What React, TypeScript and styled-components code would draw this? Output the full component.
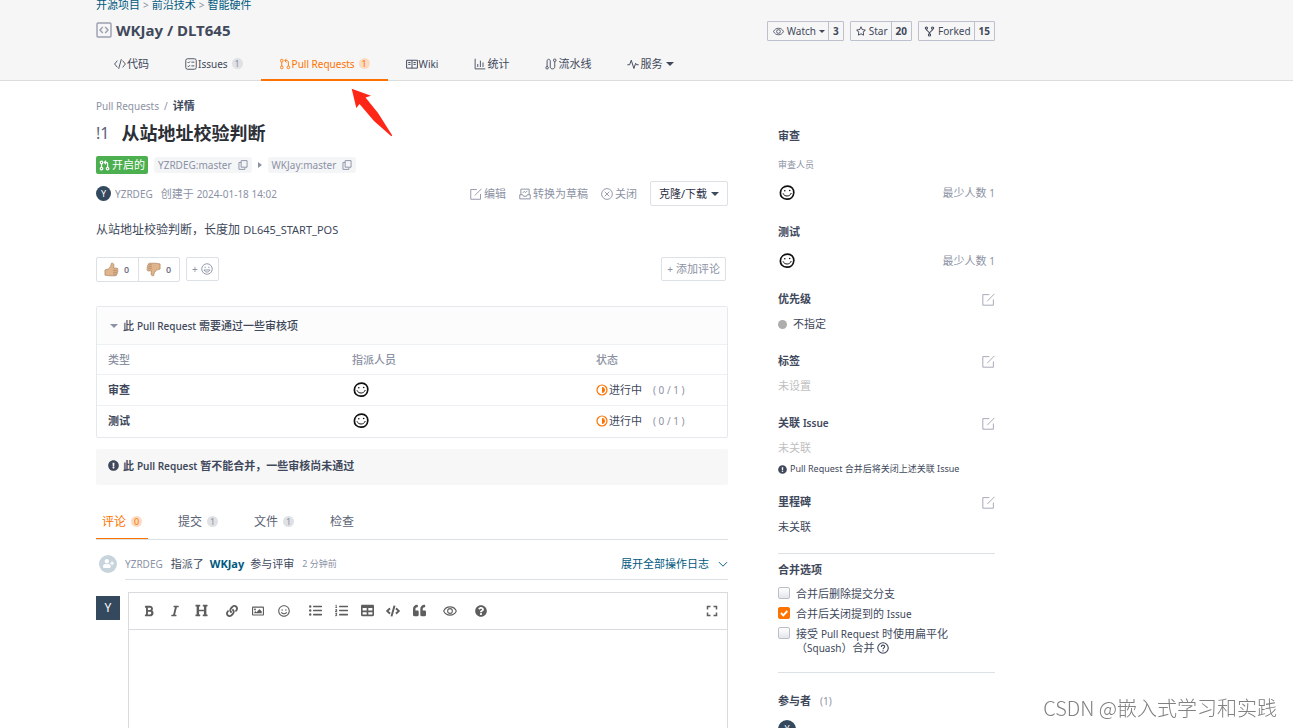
import React from 'react';
import styled, { createGlobalStyle, css } from 'styled-components';
import {
  FaBold, FaItalic, FaHeading, FaLink, FaRegImage, FaRegSmile, FaListUl, FaListOl,
  FaTable, FaCode, FaQuoteLeft, FaQuestionCircle, FaExclamationCircle, FaUserPlus, FaRegStar,
} from 'react-icons/fa';
import { MdFullscreen } from 'react-icons/md';

const c = {
  text: '#40485b',
  muted: '#8c92a4',
  faint: '#bfbfbf',
  link: '#005980',
  orange: '#fe7300',
  line: '#dce1e6',
  navy: '#34495e',
};

const GlobalStyle = createGlobalStyle`
  * { box-sizing: border-box; }
  body {
    margin: 0;
    background: #fff;
    color: ${c.text};
    font: 11px/16px "Noto Sans", "Noto Sans CJK SC", sans-serif;
  }
  button, input, textarea { font: inherit; color: inherit; }
  a { color: inherit; text-decoration: none; }
  h1, h2, h3, p { margin: 0; font-size: inherit; }
  svg { flex: none; display: block; }
`;

/* Latin runs are set one step smaller than the Chinese text around them. */
const Latin = styled.span<{ $size?: number }>`
  font-size: ${(p) => p.$size ?? 10}px;
`;

function Mixed({ text, size }: { text: string; size?: number }) {
  return (
    <span>
      {text.split(/([\x21-\x7e][\x20-\x7e]*[\x21-\x7e]|[\x21-\x7e])/).map((part, i) =>
        i % 2 ? <Latin key={i} $size={size}>{part}</Latin> : part,
      )}
    </span>
  );
}

/* ---------- icons ---------- */

const Stroke = ({ size = 12, w = 1.2, children }: { size?: number; w?: number; children: React.ReactNode }) => (
  <svg width={size} height={size} viewBox="0 0 16 16" fill="none" stroke="currentColor" strokeWidth={w} aria-hidden>
    {children}
  </svg>
);

const RepoIcon = () => (
  <Stroke size={16} w={1.4}>
    <rect x="1" y="1" width="14" height="14" rx="1" />
    <path d="M6.8 5 4 8l2.8 3M9.2 5 12 8l-2.8 3" />
  </Stroke>
);
const CodeIcon = () => (
  <Stroke w={1.2}><path d="M4.500 3.500.8 8l3.700 4.500M11.500 3.500 15.200 8l-3.700 4.500M9.800 1.500 6.200 14.500" /></Stroke>
);
const IssueIcon = () => (
  <Stroke w={1.2}>
    <rect x="1" y="1" width="14" height="14" rx="2.500" />
    <path d="m3.500 5.500 1.200 1.200L6.700 4.500M8.500 5.500h4M3.500 10.500l1.200 1.200 2-2.200M8.500 10.500h4" />
  </Stroke>
);
const PullIcon = ({ size = 12, w = 1.2 }: { size?: number; w?: number }) => (
  <Stroke size={size} w={w}>
    <circle cx="3.700" cy="3.500" r="1.800" />
    <circle cx="3.700" cy="12.500" r="1.800" />
    <circle cx="12.500" cy="12.500" r="1.800" />
    <path d="M3.700 5.300v5.400M12.500 10.700V5.500c0-1.300-.7-2-2-2H8M10 1 7.700 3.500 10 6" />
  </Stroke>
);
const WikiIcon = () => (
  <Stroke w={1.3}><path d="M.8 3h14.400v10.500H.8zM8 3v10.500M3 6h3M3 8.500h3M10 6h3M10 8.500h3" /></Stroke>
);
const StatsIcon = () => (
  <Stroke w={1.2}><path d="M1.500 1v13.500H15M5 12V8M8.500 12V3.500M12 12V6" /></Stroke>
);
const PipelineIcon = () => (
  <Stroke w={1.2}>
    <circle cx="2.800" cy="13" r="1.700" />
    <circle cx="13" cy="3" r="1.700" />
    <path d="M2.800 11.300V4c0-3 4.200-3 4.200 0v8c0 3.300 6 3.300 6 0V4.700" />
  </Stroke>
);
const PulseIcon = () => (
  <Stroke w={1.3}><path d="M.5 9h3l2.200-6 3.500 11 2.300-7 1.300 2h2.700" /></Stroke>
);
const EyeIcon = ({ size = 12 }: { size?: number }) => (
  <Stroke size={size}>
    <path d="M.8 8C3.500 1.700 12.500 1.700 15.200 8 12.500 14.300 3.500 14.300.8 8z" />
    <circle cx="8" cy="8" r="2.700" />
  </Stroke>
);
const ForkIcon = () => (
  <Stroke size={11} w={1.6}>
    <circle cx="3.500" cy="3" r="1.600" />
    <circle cx="12.500" cy="3" r="1.600" />
    <circle cx="8" cy="13" r="1.600" />
    <path d="M3.500 4.600c0 3.400 4.500 2.400 4.500 6.800 0-4.400 4.500-3.400 4.500-6.800" />
  </Stroke>
);
const EditIcon = ({ size = 12 }: { size?: number }) => (
  <Stroke size={size}><path d="M9 2H1v13h13V8M15.300 1 6.500 10" /></Stroke>
);
const DraftIcon = () => (
  <Stroke w={1.3}>
    <path d="M2.500 9V1.500h11V9M1 9v5.500h14V9h-4l-1 2H6L5 9zM5 6.500l2-2 1.500 1.500L11 4" />
  </Stroke>
);
const CloseIcon = () => (
  <Stroke><circle cx="8" cy="8" r="7.200" /><path d="m5 5 6 6M11 5l-6 6" /></Stroke>
);
const CopyIcon = () => (
  <Stroke size={10} w={1.5}><path d="M5 1h9.500v10.500H5zM5 4H1.500v11H11v-3" /></Stroke>
);
const SmileIcon = () => (
  <Stroke w={1.2}>
    <circle cx="8" cy="8" r="7" />
    <path d="M5.500 4.800v2M10.500 4.800v2M4 9.300c1.500 3.700 6.500 3.700 8 0z" />
  </Stroke>
);
const FaceIcon = () => (
  <svg width="18" height="18" viewBox="0 0 18 18" aria-hidden>
    <path d="M9.500 2.100C13.500 2 16 5 15.800 8.800c-.3 4-3.300 6.600-7.100 6.400C4.800 15 2.200 12.300 2.400 8.700 2.600 5 5.500 2.200 9.500 2.100z" fill="none" stroke="#111" strokeWidth="1.700" />
    <circle cx="6.800" cy="6.700" r=".8" fill="#111" />
    <circle cx="11.700" cy="6.500" r=".8" fill="#111" />
    <path d="M5 9.300c1.300 3.700 7 3.600 8.300-.3" fill="none" stroke="#111" strokeWidth="1" />
  </svg>
);
const ProgressIcon = () => (
  <svg width="12" height="12" viewBox="0 0 12 12" aria-hidden>
    <circle cx="6" cy="6" r="5" fill="none" stroke={c.orange} strokeWidth="1.200" />
    <path d="M6 3c4 0 4 6 0 6z" fill={c.orange} />
  </svg>
);
const ThumbIcon = ({ down }: { down?: boolean }) => (
  <svg width="15" height="15" viewBox="0 0 16 16" aria-hidden>
    <g transform={down ? 'rotate(180 8 8)' : undefined}>
      <path d="M1 8.500c1.500-.6 2.700-.8 3.500-1C6.500 6 7.600 4 7.800 1.500c1.700-.8 3 .4 2.800 2.200L10.200 6.500h3.300c1.500 0 1.800 1.700.8 2.300.9.600.8 1.800-.2 2.200.6.700.3 1.700-.6 2 .3.900-.3 1.700-1.400 1.700H6.500L1 14z" fill="#e0b48c" stroke="#a5805c" strokeWidth=".7" />
      <path d="M9.800 8.900h4M9.800 11h4M9.800 13h3.500" stroke="#a5805c" strokeWidth=".7" />
    </g>
  </svg>
);
const HelpIcon = () => (
  <Stroke size={12} w={1.5}>
    <circle cx="8" cy="8" r="7" />
    <path d="M5.800 6.500c0-3 4.400-3 4.400-.2 0 1.500-2.200 1.700-2.200 3.400M8 11v1.500" />
  </Stroke>
);
const ChevronIcon = () => (
  <Stroke size={10} w={1.5}><path d="M1.500 5 8 11.500 14.500 5" /></Stroke>
);

const Caret = styled.i<{ $dir?: 'down' | 'right'; $color?: string; $small?: boolean }>`
  flex: none;
  width: 0;
  height: 0;
  border: solid transparent;
  ${(p) => p.$dir === 'right'
    ? css`border-width: 3px 0 3px 4px; border-left-color: ${p.$color ?? c.text};`
    : css`border-width: ${p.$small ? '3px 3px 0' : '4px 4px 0'}; border-top-color: ${p.$color ?? c.text};`}
`;

/* ---------- page header ---------- */

const Page = styled.div`
  height: 100vh;
  overflow: hidden;
`;
const Header = styled.header`
  height: 81px;
  background: #f6f6f6;
  border-bottom: 1px solid #dcdcdc;
`;
const Container = styled.div`
  max-width: 995px;
  padding-left: 96px;
`;
const Trail = styled.nav`
  display: flex;
  gap: 3px;
  line-height: 10px;
  color: ${c.muted};
  a { color: ${c.link}; }
`;
const RepoRow = styled.div`
  display: flex;
  justify-content: space-between;
  align-items: center;
  height: 40px;
`;
const RepoName = styled.h1`
  display: flex;
  align-items: center;
  gap: 4px;
  font-size: 15px;
  line-height: 20px;
  svg { color: #9a9fb0; }
`;
const Actions = styled.div`
  display: flex;
  gap: 6px;
  padding-top: 2px;
`;
const ActionGroup = styled.div`
  display: flex;
  height: 20px;
  border: 1px solid #bdc0cd;
  border-radius: 1px;
`;
const ActionButton = styled.button`
  display: flex;
  align-items: center;
  gap: 3px;
  padding: 0 3px 0 5px;
  border: 0;
  background: none;
  font-size: 10px;
`;
const ActionCount = styled.a`
  padding: 0 4px;
  border-left: 1px solid #bdc0cd;
  font-size: 10px;
  line-height: 18px;
  font-weight: 700;
`;
const RepoTabs = styled.nav`
  display: flex;
  height: 31px;
`;
const RepoTab = styled.a<{ $active?: boolean }>`
  display: flex;
  align-items: center;
  gap: 1px;
  padding: 0 18px 4px;
  white-space: nowrap;
  ${(p) => p.$active && css`
    color: ${c.orange};
    box-shadow: inset 0 -2px ${c.orange};
  `}
`;
const Count = styled.span<{ $active?: boolean }>`
  min-width: 11px;
  height: 11px;
  margin-left: 3px;
  border-radius: 6px;
  background: ${(p) => (p.$active ? '#fbdcc3' : '#e0e1e5')};
  color: ${(p) => (p.$active ? c.orange : c.muted)};
  font-size: 9px;
  line-height: 11px;
  text-align: center;
`;

/* ---------- content ---------- */

const Columns = styled(Container)`
  display: grid;
  grid-template-columns: minmax(0, 1fr) 217px;
  gap: 50px;
`;
const Main = styled.main`
  padding-top: 17px;
`;
const Crumbs = styled.nav`
  display: flex;
  gap: 5px;
  font-size: 10px;
  color: ${c.muted};
  b { font-size: 11px; color: ${c.text}; }
`;
const Title = styled.h2`
  display: flex;
  gap: 12px;
  margin-top: 7px;
  font-size: 18px;
  line-height: 24px;
  color: #2c2f36;
`;
const TitleId = styled.span`
  font-size: 16px;
  font-weight: 400;
  color: #5c6478;
`;
const Branches = styled.div`
  display: flex;
  align-items: center;
  gap: 6px;
  height: 18px;
  margin-top: 11px;
`;
const State = styled.span`
  display: flex;
  align-items: center;
  gap: 2px;
  height: 18px;
  padding: 0 3px;
  border-radius: 2px;
  background: #4caf50;
  color: #fff;
`;
const Branch = styled.span`
  display: flex;
  align-items: center;
  gap: 6px;
  height: 16px;
  padding: 0 4px;
  border-radius: 3px;
  background: #f4f5f7;
  color: ${c.muted};
  font-size: 10px;
`;
const Plain = styled.button`
  display: flex;
  align-items: center;
  gap: 2px;
  padding: 0;
  border: 0;
  background: none;
  white-space: nowrap;
`;
const Meta = styled.div`
  display: flex;
  align-items: center;
  height: 25px;
  margin-top: 7px;
  color: ${c.muted};
`;
const Avatar = styled.span<{ $size: number; $square?: boolean }>`
  display: grid;
  place-items: center;
  flex: none;
  width: ${(p) => p.$size}px;
  height: ${(p) => p.$size}px;
  border-radius: ${(p) => (p.$square ? 0 : '50%')};
  background: ${c.navy};
  color: #fff;
  font-size: ${(p) => (p.$square ? 12 : 9)}px;
`;
const MetaText = styled.span`
  display: flex;
  gap: 8px;
  margin: 0 auto 0 4px;
`;
const MetaTools = styled.div`
  display: flex;
  align-items: center;
  gap: 13px;
`;
const Outlined = styled.button<{ $dark?: boolean }>`
  display: flex;
  align-items: center;
  gap: ${(p) => (p.$dark ? 4 : 3)}px;
  height: ${(p) => (p.$dark ? 25 : 24)}px;
  padding: 0 ${(p) => (p.$dark ? 8 : 5)}px;
  border: 1px solid ${c.line};
  border-radius: 2px;
  background: #fff;
  color: ${(p) => (p.$dark ? '#2c2f46' : c.muted)};
  white-space: nowrap;
`;
const Description = styled.p`
  margin-top: 16px;
  font-size: 12px;
`;
const Reactions = styled.div`
  display: flex;
  align-items: flex-start;
  gap: 6px;
  margin-top: 19px;
`;
const Votes = styled.div`
  display: flex;
  height: 25px;
  border: 1px solid ${c.line};
  border-radius: 2px;
`;
const Vote = styled.button`
  display: flex;
  align-items: center;
  gap: 5px;
  width: 41px;
  padding: 0 7px;
  border: 0;
  background: none;
  color: #707789;
  font-size: 9px;
  font-weight: 600;
  & + & { border-left: 1px solid ${c.line}; }
`;
const Right = styled.div`
  margin-left: auto;
  padding-right: 2px;
`;
const Review = styled.section`
  margin-top: 24px;
  border: 1px solid #e3e9ed;
  border-radius: 2px;
`;
const ReviewHead = styled.button`
  display: flex;
  align-items: center;
  gap: 5px;
  width: 100%;
  height: 37px;
  padding: 0 13px;
  border: 0;
  background: #fcfcfc;
  font-weight: 500;
`;
const ReviewTable = styled.table`
  width: 100%;
  table-layout: fixed;
  border-collapse: collapse;
  text-align: left;
  th, td { padding: 0 11px; height: 31px; border-top: 1px solid #eef1f4; }
  thead th { height: 30px; color: ${c.muted}; font-weight: 500; }
  tbody th { font-weight: 600; }
  col:not(:last-child) { width: 244px; }
`;
const Status = styled.span`
  display: flex;
  align-items: center;
  gap: 1px;
  em { margin-left: 10px; font-style: normal; font-size: 10px; color: ${c.muted}; }
`;
const Notice = styled.p`
  display: flex;
  align-items: center;
  gap: 4px;
  height: 36px;
  margin-top: 11px;
  padding: 0 12px 2px;
  border-radius: 2px;
  background: #f7f7f7;
  font-weight: 600;
`;
const Tabs = styled.nav`
  display: flex;
  gap: 24px;
  height: 38px;
  margin-top: 17px;
  border-bottom: 1px solid ${c.line};
`;
const Tab = styled.a<{ $active?: boolean }>`
  display: flex;
  align-items: center;
  gap: 2px;
  height: 37px;
  padding: 3px 6px 0;
  font-size: 12px;
  color: ${(p) => (p.$active ? c.orange : '#5b6274')};
  ${(p) => p.$active && css`box-shadow: inset 0 -1px ${c.orange};`}
`;
const Log = styled.div`
  display: flex;
  align-items: center;
  gap: 8px;
  height: 40px;
  padding-left: 3px;
`;
const LogIcon = styled.span`
  display: grid;
  place-items: center;
  flex: none;
  width: 18px;
  height: 18px;
  margin-top: 8px;
  border-radius: 50%;
  background: #c8d4dc;
  color: #fff;
`;
const LogLine = styled.div`
  display: flex;
  align-items: center;
  flex: 1;
  gap: 6px;
  height: 40px;
  padding-top: 9px;
  border-bottom: 1px solid ${c.line};
  > :first-child, time { color: ${c.muted}; }
  > :first-child { margin-right: 2px; font-size: 10px; }
  strong { color: ${c.link}; }
  time { font-size: 9px; margin-left: 2px; }
`;
const Expand = styled(Plain)`
  gap: 9px;
  margin-left: auto;
  color: ${c.link};
`;
const Comment = styled.form`
  display: flex;
  gap: 8px;
  margin-top: 12px;
  > :first-child { margin-top: 4px; }
`;
const Editor = styled.div`
  flex: 1;
  border: 1px solid #d8dadd;
  textarea {
    display: block;
    width: 100%;
    height: 200px;
    padding: 8px;
    border: 0;
    outline: 0;
    resize: none;
  }
`;
const Toolbar = styled.div`
  display: flex;
  align-items: center;
  gap: 5px;
  height: 37px;
  padding: 0 2px 0 7px;
  border-bottom: 1px solid #d8dadd;
`;
const ToolGroup = styled.div`
  display: flex;
`;
const Tool = styled.button<{ $end?: boolean }>`
  display: grid;
  place-items: center;
  width: 26px;
  height: 26px;
  padding: 0;
  margin-left: ${(p) => (p.$end ? 'auto' : 0)};
  border: 0;
  background: none;
  color: #5e5e5e;
`;

/* ---------- sidebar ---------- */

const Side = styled.aside`
  padding-top: 47px;
`;
const SideBlock = styled.section<{ $space?: number }>`
  margin-bottom: ${(p) => p.$space ?? 21}px;
`;
const SideHead = styled.div<{ $space?: number }>`
  display: flex;
  align-items: center;
  justify-content: space-between;
  height: 16px;
  margin-bottom: ${(p) => p.$space ?? 9}px;
  h3 { font-weight: 600; }
  button { color: #a3a9b5; }
`;
const SideLabel = styled.div`
  margin: 13px 0 11px;
  font-size: 9px;
  color: ${c.muted};
`;
const SideRow = styled.div`
  display: flex;
  align-items: center;
  justify-content: space-between;
  height: 18px;
  color: ${c.muted};
`;
const SideValue = styled.div<{ $empty?: boolean }>`
  display: flex;
  align-items: center;
  gap: 6px;
  height: 16px;
  color: ${(p) => (p.$empty ? c.faint : c.text)};
`;
const Dot = styled.i`
  width: 9px;
  height: 9px;
  border-radius: 50%;
  background: #adadad;
`;
const Hint = styled.div`
  display: flex;
  align-items: center;
  gap: 3px;
  height: 16px;
  margin-top: 5px;
  font-size: 9px;
  white-space: nowrap;
`;
const Options = styled.fieldset`
  margin: 0;
  padding: 8px 0 17px;
  border: solid ${c.line};
  border-width: 1px 0;
  h3 { margin-bottom: 7px; font-weight: 600; }
`;
const Option = styled.label`
  display: flex;
  gap: 6px;
  min-height: 20px;
  line-height: 14px;
  padding-top: 2px;
`;
const Box = styled.input`
  appearance: none;
  flex: none;
  width: 12px;
  height: 12px;
  margin: 0;
  border: 1px solid #bcbfc6;
  border-radius: 2px;
  background: linear-gradient(#fff, #e4e6ec);
  &:checked {
    border-color: ${c.orange};
    background: ${c.orange} url("data:image/svg+xml,%3Csvg xmlns='http://www.w3.org/2000/svg' viewBox='0 0 10 10'%3E%3Cpath d='M2 5l2.300 2.300L8.300 3' fill='none' stroke='white' stroke-width='1.900'/%3E%3C/svg%3E");
  }
`;
const OptionText = styled.span`
  > span { white-space: nowrap; }
`;
const Second = styled.span`
  display: flex;
  align-items: center;
  gap: 3px;
`;
const People = styled.section`
  margin-top: 20px;
  h3 { display: flex; gap: 9px; margin-bottom: 11px; font-weight: 600; }
  h3 span { font-weight: 400; font-size: 10px; color: ${c.muted}; }
`;

/* ---------- overlays ---------- */

const Pointer = styled.svg`
  position: absolute;
  left: 350px;
  top: 87px;
`;
const Watermark = styled.div`
  position: fixed;
  right: 16px;
  bottom: 8px;
  font-family: "Noto Sans CJK SC", sans-serif;
  font-size: 20px;
  line-height: 24px;
  font-weight: 300;
  color: #808080;
`;

const EditButton = ({ label }: { label: string }) => (
  <Plain type="button" aria-label={label}><EditIcon size={13} /></Plain>
);

const reviewRows = ['审查', '测试'];
const toolGroups = [
  [['粗体', <FaBold size={12} />], ['斜体', <FaItalic size={12} />], ['标题', <FaHeading size={13} />]],
  [['链接', <FaLink size={12} />], ['图片', <FaRegImage size={12} />], ['表情', <FaRegSmile size={12} />]],
  [['列表', <FaListUl size={13} />], ['有序列表', <FaListOl size={13} />], ['表格', <FaTable size={13} />], ['代码', <FaCode size={14} />], ['引用', <FaQuoteLeft size={13} />]],
  [['预览', <EyeIcon size={14} />]],
  [['帮助', <FaQuestionCircle size={12} />]],
] as [string, React.ReactNode][][];

export default function App() {
  return (
    <Page>
      <GlobalStyle />
      <Header>
        <Container>
          <Trail>
            <a href="#open">开源项目</a><Latin>&gt;</Latin>
            <a href="#tech">前沿技术</a><Latin>&gt;</Latin>
            <a href="#hardware">智能硬件</a>
          </Trail>
          <RepoRow>
            <RepoName><RepoIcon />WKJay / DLT645</RepoName>
            <Actions>
              <ActionGroup>
                <ActionButton type="button"><EyeIcon size={11} />Watch<Caret $small /></ActionButton>
                <ActionCount href="#watchers">3</ActionCount>
              </ActionGroup>
              <ActionGroup>
                <ActionButton type="button"><FaRegStar size={10} />Star</ActionButton>
                <ActionCount href="#stars">20</ActionCount>
              </ActionGroup>
              <ActionGroup>
                <ActionButton type="button"><ForkIcon />Forked</ActionButton>
                <ActionCount href="#forks">15</ActionCount>
              </ActionGroup>
            </Actions>
          </RepoRow>
          <RepoTabs>
            <RepoTab href="#code"><CodeIcon />代码</RepoTab>
            <RepoTab href="#issues"><IssueIcon /><Latin>Issues</Latin><Count>1</Count></RepoTab>
            <RepoTab href="#pulls" $active><PullIcon /><Latin>Pull Requests</Latin><Count $active>1</Count></RepoTab>
            <RepoTab href="#wiki"><WikiIcon /><Latin>Wiki</Latin></RepoTab>
            <RepoTab href="#stats"><StatsIcon />统计</RepoTab>
            <RepoTab href="#pipeline"><PipelineIcon />流水线</RepoTab>
            <RepoTab href="#services"><PulseIcon />服务&nbsp;<Caret /></RepoTab>
          </RepoTabs>
        </Container>
      </Header>

      <Columns>
        <Main>
          <Crumbs><a href="#pulls">Pull Requests</a><span>/</span><b>详情</b></Crumbs>
          <Title><TitleId>!1</TitleId>从站地址校验判断</Title>
          <Branches>
            <State><PullIcon size={11} w={1.8} />开启的</State>
            <Branch>YZRDEG:master<Plain type="button" aria-label="复制"><CopyIcon /></Plain></Branch>
            <Caret $dir="right" $color={c.muted} />
            <Branch>WKJay:master<Plain type="button" aria-label="复制"><CopyIcon /></Plain></Branch>
          </Branches>
          <Meta>
            <Avatar $size={15}>Y</Avatar>
            <MetaText>
              <Latin>YZRDEG</Latin>
              <Mixed text="创建于 2024-01-18 14:02" />
            </MetaText>
            <MetaTools>
              <Plain type="button"><EditIcon />编辑</Plain>
              <Plain type="button"><DraftIcon />转换为草稿</Plain>
              <Plain type="button"><CloseIcon />关闭</Plain>
              <Outlined type="button" $dark>克隆/下载<Caret /></Outlined>
            </MetaTools>
          </Meta>
          <Description><Mixed text="从站地址校验判断，长度加 DL645_START_POS" size={11} /></Description>
          <Reactions>
            <Votes>
              <Vote type="button"><ThumbIcon />0</Vote>
              <Vote type="button"><ThumbIcon down />0</Vote>
            </Votes>
            <Outlined type="button" aria-label="添加表情"><Latin>+</Latin><SmileIcon /></Outlined>
            <Right><Outlined type="button"><Latin>+</Latin>添加评论</Outlined></Right>
          </Reactions>

          <Review>
            <ReviewHead type="button"><Caret $color={c.muted} /><Mixed text="此 Pull Request 需要通过一些审核项" /></ReviewHead>
            <ReviewTable>
              <colgroup><col /><col /><col /></colgroup>
              <thead><tr><th>类型</th><th>指派人员</th><th>状态</th></tr></thead>
              <tbody>
                {reviewRows.map((name) => (
                  <tr key={name}>
                    <th scope="row">{name}</th>
                    <td><FaceIcon /></td>
                    <td><Status><ProgressIcon />进行中<em>( 0 / 1 )</em></Status></td>
                  </tr>
                ))}
              </tbody>
            </ReviewTable>
          </Review>
          <Notice><FaExclamationCircle size={11} /><Mixed text="此 Pull Request 暂不能合并，一些审核尚未通过" /></Notice>

          <Tabs>
            <Tab href="#comments" $active>评论<Count $active>0</Count></Tab>
            <Tab href="#commits">提交<Count>1</Count></Tab>
            <Tab href="#files">文件<Count>1</Count></Tab>
            <Tab href="#checks">检查</Tab>
          </Tabs>
          <Log>
            <LogIcon><FaUserPlus size={11} /></LogIcon>
            <LogLine>
              <span>YZRDEG</span><span>指派了</span><strong>WKJay</strong><span>参与评审</span>
              <time>2 分钟前</time>
              <Expand type="button">展开全部操作日志<ChevronIcon /></Expand>
            </LogLine>
          </Log>
          <Comment>
            <Avatar $size={24} $square>Y</Avatar>
            <Editor>
              <Toolbar>
                {toolGroups.map((group, i) => (
                  <ToolGroup key={i}>
                    {group.map(([label, icon]) => (
                      <Tool key={label} type="button" aria-label={label}>{icon}</Tool>
                    ))}
                  </ToolGroup>
                ))}
                <Tool $end type="button" aria-label="全屏"><MdFullscreen size={18} /></Tool>
              </Toolbar>
              <textarea aria-label="评论内容" />
            </Editor>
          </Comment>
        </Main>

        <Side>
          <SideBlock $space={22}>
            <SideHead><h3>审查</h3></SideHead>
            <SideLabel>审查人员</SideLabel>
            <SideRow><FaceIcon /><Mixed text="最少人数 1" /></SideRow>
          </SideBlock>
          <SideBlock>
            <SideHead $space={12}><h3>测试</h3></SideHead>
            <SideRow><FaceIcon /><Mixed text="最少人数 1" /></SideRow>
          </SideBlock>
          <SideBlock>
            <SideHead><h3>优先级</h3><EditButton label="编辑优先级" /></SideHead>
            <SideValue><Dot />不指定</SideValue>
          </SideBlock>
          <SideBlock>
            <SideHead><h3>标签</h3><EditButton label="编辑标签" /></SideHead>
            <SideValue $empty>未设置</SideValue>
          </SideBlock>
          <SideBlock $space={17}>
            <SideHead><h3><Mixed text="关联 Issue" /></h3><EditButton label="编辑关联" /></SideHead>
            <SideValue $empty>未关联</SideValue>
            <Hint><FaExclamationCircle size={9} /><Mixed text="Pull Request 合并后将关闭上述关联 Issue" size={9} /></Hint>
          </SideBlock>
          <SideBlock $space={18}>
            <SideHead><h3>里程碑</h3><EditButton label="编辑里程碑" /></SideHead>
            <SideValue>未关联</SideValue>
          </SideBlock>
          <Options>
            <h3>合并选项</h3>
            <Option><Box type="checkbox" /><OptionText>合并后删除提交分支</OptionText></Option>
            <Option><Box type="checkbox" defaultChecked /><OptionText><Mixed text="合并后关闭提到的 Issue" /></OptionText></Option>
            <Option>
              <Box type="checkbox" />
              <OptionText>
                <Mixed text="接受 Pull Request 时使用扁平化" />
                <Second><Mixed text="（Squash）合并" /><HelpIcon /></Second>
              </OptionText>
            </Option>
          </Options>
          <People>
            <h3>参与者<span>(1)</span></h3>
            <Avatar $size={18}>Y</Avatar>
          </People>
        </Side>
      </Columns>

      <Pointer width="44" height="52" viewBox="0 0 44 52" aria-hidden>
        <path d="M1.700 1.700 21 8.700 15.500 10.500 28 26 42.300 48.500 41.300 49.300 24 34 9.500 17 6.300 21z" fill="#fe2616" />
      </Pointer>
      <Watermark>CSDN @嵌入式学习和实践</Watermark>
    </Page>
  );
}
